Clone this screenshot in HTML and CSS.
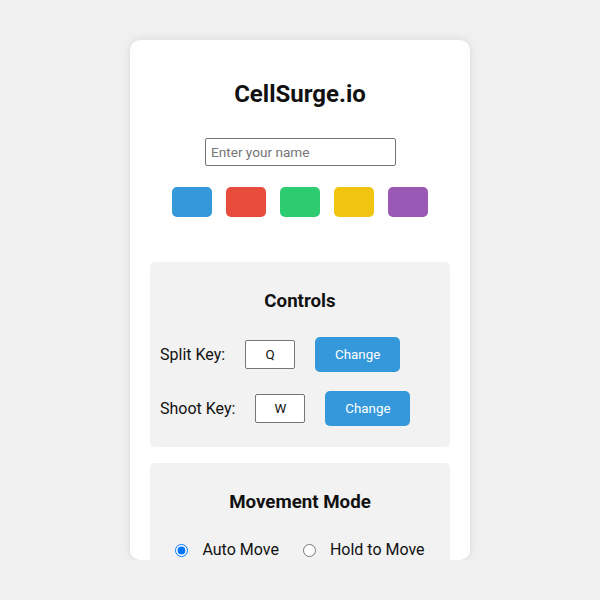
FILE: index.html
```html
<!DOCTYPE html>
<html lang="en">
<head>
<meta charset="utf-8">
<title>CellSurge.io</title>
<link rel="stylesheet" href="styles.css">
</head>
<body>
<div class="card">
  <h1 class="title">CellSurge.io</h1>
  <div class="name-wrap">
    <input class="name-input" type="text" placeholder="Enter your name">
  </div>
  <div class="swatches">
    <div class="swatch blue"></div>
    <div class="swatch red"></div>
    <div class="swatch green"></div>
    <div class="swatch yellow"></div>
    <div class="swatch purple"></div>
  </div>
  <div class="panel">
    <h3 class="panel-title">Controls</h3>
    <div class="row">
      <span class="row-label">Split Key:</span>
      <input class="key-input" type="text" value="Q" readonly>
      <button class="btn">Change</button>
    </div>
    <div class="row">
      <span class="row-label">Shoot Key:</span>
      <input class="key-input" type="text" value="W" readonly>
      <button class="btn">Change</button>
    </div>
  </div>
  <div class="panel">
    <h3 class="panel-title">Movement Mode</h3>
    <div class="radios">
      <label class="radio-label"><input class="radio" type="radio" name="mode" checked>Auto Move</label>
      <label class="radio-label"><input class="radio" type="radio" name="mode">Hold to Move</label>
    </div>
  </div>
</div>
</body>
</html>
```
FILE: styles.css
```css
html, body {
  margin: 0;
  padding: 0;
}
body {
  background: #f0f0f0;
  font-family: Roboto, "Liberation Sans", sans-serif;
  color: #111;
  padding-top: 40px;
}
.card {
  width: 340px;
  height: 520px;
  box-sizing: border-box;
  margin: 0 auto;
  padding: 40px 20px 0;
  background: #fff;
  border-radius: 10px;
  box-shadow: 0 0 10px rgba(0, 0, 0, 0.1);
  overflow: hidden;
}
.title {
  margin: 0 0 30px;
  font-size: 24px;
  line-height: 28px;
  font-weight: 700;
  text-align: center;
}
.name-wrap {
  display: flex;
  justify-content: center;
}
.name-input {
  width: 191px;
  height: 28px;
  box-sizing: border-box;
  border: 1px solid #767676;
  border-radius: 2px;
  padding: 0 5px;
  font-family: Roboto, "Liberation Sans", sans-serif;
  font-size: 13.6px;
  color: #111;
  margin-left: 1px;
}
.name-input::placeholder {
  color: #757575;
}
.swatches {
  display: flex;
  justify-content: center;
  gap: 14px;
  margin-top: 21px;
}
.swatch {
  width: 40px;
  height: 30px;
  border-radius: 5px;
}
.blue { background: #3498db; }
.red { background: #e74c3c; }
.green { background: #2ecc71; }
.yellow { background: #f1c40f; }
.purple { background: #9b59b6; }
.panel {
  background: #f2f2f2;
  border-radius: 5px;
  padding: 10px 10px 21px;
  margin-top: 45px;
}
.panel + .panel {
  margin-top: 16px;
}
.panel-title {
  margin: 18px 0 25px;
  font-size: 18.72px;
  line-height: 22px;
  font-weight: 700;
  text-align: center;
}
.row {
  display: flex;
  align-items: center;
  height: 35px;
}
.row + .row {
  margin-top: 19px;
}
.row-label {
  font-size: 16px;
  margin-right: 20px;
}
.key-input {
  width: 50px;
  height: 29px;
  box-sizing: border-box;
  border: 1px solid #767676;
  border-radius: 2px;
  background: #fff;
  text-align: center;
  font-family: Roboto, "Liberation Sans", sans-serif;
  font-size: 13.33px;
  color: #111;
  padding: 0;
  margin-right: 20px;
}
.btn {
  width: 85px;
  height: 35px;
  border: none;
  border-radius: 5px;
  background: #3498db;
  color: #fff;
  font-family: Roboto, "Liberation Sans", sans-serif;
  font-size: 13.33px;
  padding: 0;
}
.radios {
  display: flex;
  justify-content: center;
  gap: 24px;
  font-size: 16px;
  line-height: 20px;
  padding-top: 2px;
}
.radio-label {
  display: flex;
  align-items: center;
}
.radio {
  width: 13px;
  height: 13px;
  margin: 0 14px 0 0;
}
```
